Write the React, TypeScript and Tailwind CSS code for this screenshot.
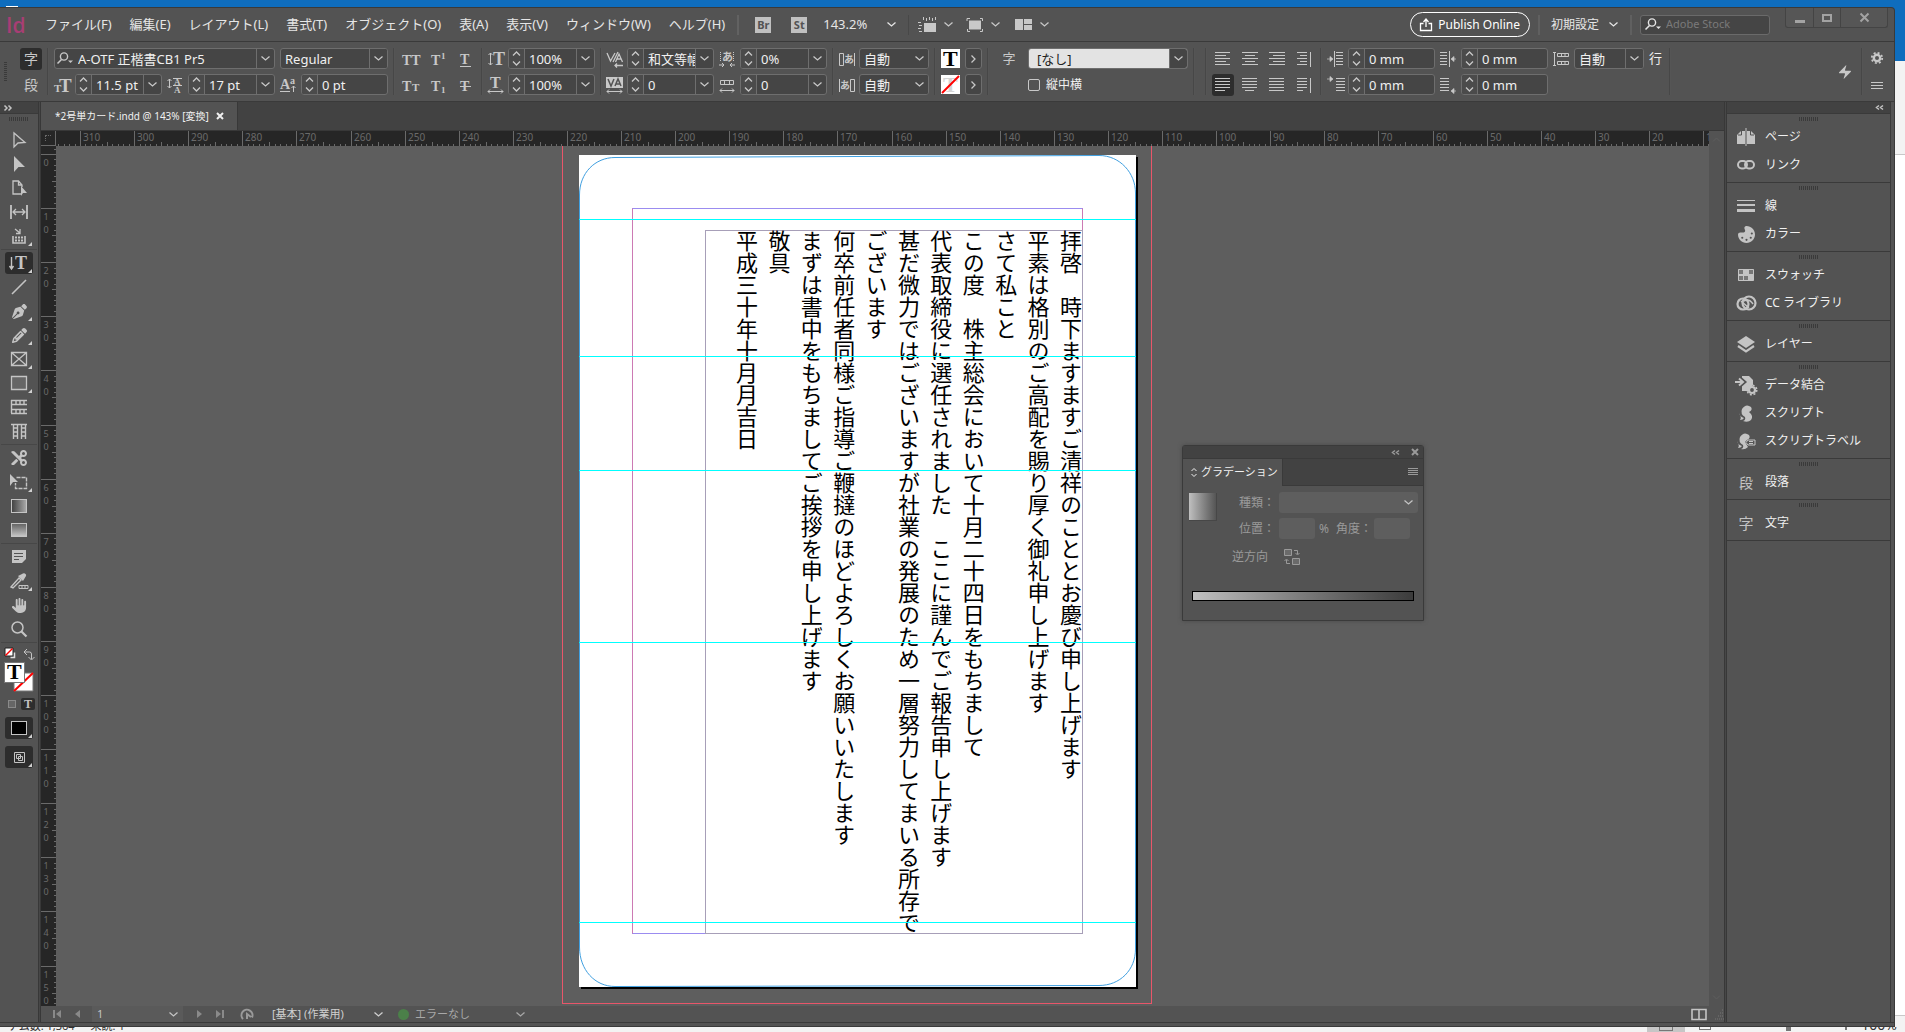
import type { ReactNode } from "react";
import { useState } from "react";
import { Zap } from "lucide-react";
import { FaHand, FaScissors, FaPalette, FaPenNib, FaPencil } from "react-icons/fa6";

const menus = [
  "ファイル(F)",
  "編集(E)",
  "レイアウト(L)",
  "書式(T)",
  "オブジェクト(O)",
  "表(A)",
  "表示(V)",
  "ウィンドウ(W)",
  "ヘルプ(H)",
];

const letter = [
  "拝啓　時下ますますご清祥のこととお慶び申し上げます",
  "平素は格別のご高配を賜り厚く御礼申し上げます",
  "さて私こと",
  "この度　株主総会において十月二十四日をもちまして",
  "代表取締役に選任されました　ここに謹んでご報告申し上げます",
  "甚だ微力ではございますが社業の発展のため一層努力してまいる所存で",
  "ございます",
  "何卒前任者同様ご指導ご鞭撻のほどよろしくお願いいたします",
  "まずは書中をもちましてご挨拶を申し上げます",
  "敬具",
  "平成三十年十月月吉日",
];

const RULER_STEP = 54.1;

function Svg({ w = 16, h = 16, children }: { w?: number; h?: number; children: ReactNode }) {
  return (
    <svg
      width={w}
      height={h}
      viewBox={`0 0 ${w} ${h}`}
      fill="none"
      stroke="currentColor"
      className="shrink-0 overflow-visible"
      aria-hidden="true"
    >
      {children}
    </svg>
  );
}

function Glyph({ x = 0, y = 14, size = 16, children }: { x?: number; y?: number; size?: number; children: string }) {
  return (
    <text
      x={x}
      y={y}
      fontSize={size}
      fontWeight="bold"
      fill="currentColor"
      stroke="none"
      className="font-['Liberation_Serif','Noto_Sans_CJK_JP',serif]"
    >
      {children}
    </text>
  );
}

function Chevron() {
  return (
    <Svg w={9} h={5}>
      <path d="M.5 .5 4.5 4 8.5 .5" strokeWidth="1.3" />
    </Svg>
  );
}

function Sep() {
  return <div className="w-[2px] shrink-0 self-stretch border-l border-[#474747] bg-[#555555]" />;
}

function Stepper({ label }: { label: string }) {
  return (
    <div className="flex w-4 shrink-0 flex-col items-center justify-between border-r border-[#6e6e6e] bg-[#4b4b4b] py-[2px]">
      <button aria-label={`${label} +`}>
        <Svg w={9} h={5}>
          <path d="M1 4.5 4.5 1 8 4.5" strokeWidth="1.3" />
        </Svg>
      </button>
      <button aria-label={`${label} -`}>
        <Svg w={9} h={5}>
          <path d="M1 .5 4.5 4 8 .5" strokeWidth="1.3" />
        </Svg>
      </button>
    </div>
  );
}

function NumberBox({ label, value, drop = false }: { label: string; value: string; drop?: boolean }) {
  const [text, setText] = useState(value);
  return (
    <div className="flex h-[21px] w-[87px] overflow-hidden rounded-[3px] border border-[#6e6e6e] bg-[#454545]">
      <Stepper label={label} />
      <input
        aria-label={label}
        value={text}
        onChange={(e) => setText(e.target.value)}
        className="min-w-0 flex-1 bg-transparent pl-1 text-[13px] leading-[18px] text-[#f0f0f0] outline-none"
      />
      {drop && (
        <button aria-label={`${label} ▾`} className="flex w-[18px] shrink-0 items-center justify-center border-l border-[#6e6e6e]">
          <Chevron />
        </button>
      )}
    </div>
  );
}

function Select({
  label,
  value,
  className,
  light = false,
  divider = true,
}: {
  label: string;
  value: string;
  className: string;
  light?: boolean;
  divider?: boolean;
}) {
  return (
    <div className={`relative h-[21px] overflow-hidden rounded-[3px] border border-[#6e6e6e] bg-[#454545] ${className}`}>
      <select
        aria-label={label}
        className={
          light
            ? "block h-full w-full appearance-none bg-[#e3e3e3] pl-2 text-[13px] leading-[18px] text-[#222222] outline-none"
            : "block h-full w-full appearance-none bg-transparent pl-1 text-[13px] leading-[18px] text-[#f0f0f0] outline-none"
        }
      >
        <option>{value}</option>
      </select>
      <span
        className={`pointer-events-none absolute inset-y-0 right-0 flex w-[18px] items-center justify-center bg-[#454545] ${
          divider ? "border-l border-[#6e6e6e]" : ""
        }`}
      >
        <Chevron />
      </span>
    </div>
  );
}

function Rows({ children, className = "" }: { children: ReactNode; className?: string }) {
  return <div className={`flex shrink-0 flex-col gap-[5px] ${className}`}>{children}</div>;
}

function Row({ children }: { children: ReactNode }) {
  return <div className="flex h-[21px] items-center gap-[5px]">{children}</div>;
}

function TypeButton({ label, children }: { label: string; children: ReactNode }) {
  return (
    <button aria-label={label} className="flex h-[21px] w-[22px] items-center justify-center">
      {children}
    </button>
  );
}

const alignLines: Record<string, number[][]> = {
  left: [[0, 15], [0, 11], [0, 15], [0, 11], [0, 15]],
  center: [[0, 16], [3, 13], [0, 16], [3, 13], [0, 16]],
  right: [[0, 16], [4, 16], [0, 16], [4, 16], [0, 16]],
  spine: [[1, 11], [4, 11], [1, 11], [4, 11], [1, 11]],
  jleft: [[0, 15], [0, 15], [0, 15], [0, 15], [0, 10]],
  jcenter: [[0, 15], [0, 15], [0, 15], [0, 15], [3, 12]],
  jfull: [[0, 15], [0, 15], [0, 15], [0, 15], [0, 15]],
  jspine: [[1, 11], [1, 11], [1, 11], [1, 11], [1, 7]],
};

function AlignButton({ kind, active = false }: { kind: string; active?: boolean }) {
  return (
    <button
      aria-label={kind}
      className={`flex h-[22px] w-[22px] items-center justify-center rounded-[3px] ${active ? "bg-[#2d2d2d]" : ""}`}
    >
      <Svg w={16} h={14}>
        {alignLines[kind].map(([a, b], i) => (
          <path key={i} d={`M${a} ${i * 3 + 0.5}H${b}`} />
        ))}
        {kind.endsWith("spine") && <path d="M14.5 0V15" />}
      </Svg>
    </button>
  );
}

function IndentIcon({ flip = false, last = false }: { flip?: boolean; last?: boolean }) {
  const x = flip ? 0 : 7;
  const arrow = flip ? "M16 8H12M14 5.5 11 8 14 10.5Z" : "M0 8H4M3 5.5 6 8 3 10.5Z";
  return (
    <Svg>
      {[1, 4, 7, 10, 13].map((y) => (
        <path key={y} d={`M${x + (flip ? 0 : 2)} ${y + 0.5}h${last ? 9 : 7}`} />
      ))}
      {!last && <path d={flip ? "M9.5 0V16" : "M7.5 0V16"} />}
      <g transform={last ? (flip ? "translate(0 6)" : "translate(0 -6)") : undefined}>
        <path d={arrow} fill="currentColor" strokeWidth=".7" />
      </g>
    </Svg>
  );
}

function MenuBar() {
  return (
    <header className="flex h-[34px] shrink-0 items-center border-b border-[#3a3a3a] text-[13px] text-[#e6e6e6]">
      <span className="w-[45px] pl-[6px] font-['Open_Sans',sans-serif] text-[21px] leading-6 font-semibold text-[#a83e74]">Id</span>
      <nav className="flex gap-[18px]">
        {menus.map((m) => (
          <button key={m} className="whitespace-nowrap">
            {m}
          </button>
        ))}
      </nav>
      <div className="ml-3 h-5 w-[2px] bg-[#626262]" />
      <button className="ml-4 h-4 w-4 bg-[#c0c0c0] text-[11px] leading-4 font-bold text-[#535353]">Br</button>
      <button className="ml-5 h-4 w-4 bg-[#c0c0c0] text-[11px] leading-4 font-bold text-[#535353]">St</button>
      <button className="ml-4 flex items-center gap-5">
        143.2%
        <Chevron />
      </button>
      <div className="ml-3 h-5 w-px bg-[#484848]" />
      <button aria-label="表示オプション" className="ml-[9px] flex items-center gap-2 text-[#c8c8c8]">
        <Svg w={18} h={16}>
          <path d="M5.5 3V0M8.5 4V1M11.5 3V0M14.5 4V1M17.5 3V0M0 5.500H3M1 8.500H4M0 11.500H3M1 14.500H4" />
          <path d="M6 6h12v9H6z" fill="currentColor" stroke="none" />
        </Svg>
        <Chevron />
      </button>
      <button aria-label="スクリーンモード" className="ml-[14px] flex items-center gap-2 text-[#c8c8c8]">
        <Svg w={16} h={14}>
          <path d="M0 3V.5H3M13 .5h2.500V3M0.500 11v2.500H3M13 13.500h2.500V11" />
          <path d="M2 2.500h12v9H2z" fill="currentColor" stroke="none" />
        </Svg>
        <Chevron />
      </button>
      <button aria-label="ドキュメントレイアウト" className="ml-[15px] flex items-center gap-2 text-[#c8c8c8]">
        <Svg w={17} h={11}>
          <path d="M0 0h8v11H0zM9 0h8v5H9zM9 6h8v5H9z" fill="currentColor" stroke="none" />
        </Svg>
        <Chevron />
      </button>
      <div className="ml-auto flex h-full items-center">
        <button className="flex h-[25px] items-center gap-[6px] rounded-full border border-white px-[9px] text-[12px] text-white">
          <Svg w={12} h={13}>
            <path d="M3.500 5.500H.5v7h11v-7h-3M6 9V1.500M3.500 4 6 1l2.500 3" strokeWidth="1.3" />
          </Svg>
          Publish Online
        </button>
        <div className="ml-2 h-5 w-[2px] bg-[#606060]" />
        <button className="ml-[11px] flex items-center gap-[10px] text-[12px]">
          初期設定
          <Chevron />
        </button>
        <div className="ml-3 h-5 w-[2px] bg-[#606060]" />
        <label className="ml-2 flex h-5 w-[130px] items-center gap-1 rounded-[3px] border border-[#6a6a6a] bg-[#454545] pl-1">
          <SearchGlyph />
          <input
            aria-label="Adobe Stock"
            placeholder="Adobe Stock"
            className="min-w-0 flex-1 bg-transparent text-[11px] outline-none placeholder:text-[#7a7a7a]"
          />
        </label>
        <div className="mr-[6px] ml-[15px] flex h-5 self-start rounded-b-[3px] border border-t-0 border-[#444444] bg-[#565656] text-[#a3a3a3]">
          <button aria-label="最小化" className="flex w-[27px] items-end justify-center pb-1">
            <span className="h-[3px] w-[10px] bg-[#a3a3a3]" />
          </button>
          <button aria-label="最大化" className="flex w-7 items-center justify-center border-x border-[#444444]">
            <span className="h-2 w-[10px] border-2 border-[#a3a3a3]" />
          </button>
          <button aria-label="閉じる" className="flex w-[46px] items-center justify-center">
            <Svg w={9} h={9}>
              <path d="M.5 .5l8 8M8.500 .5l-8 8" strokeWidth="2" />
            </Svg>
          </button>
        </div>
      </div>
    </header>
  );
}

function SearchGlyph() {
  return (
    <Svg w={17} h={13}>
      <circle cx="7" cy="4.500" r="3.600" strokeWidth="1.400" />
      <path d="M4.500 7.500.5 11.500" strokeWidth="1.600" />
      <path d="M11 8.500h5l-2.500 2.500z" fill="currentColor" stroke="none" />
    </Svg>
  );
}

function ControlPanel() {
  return (
    <section className="flex h-[60px] shrink-0 items-start gap-[5px] border-b border-[#3a3a3a] py-[6px] pl-1 text-[#c8c8c8]">
      <div className="mt-[14px] h-5 w-[3px] bg-[repeating-linear-gradient(to_bottom,#3a3a3a_0_1px,transparent_1px_2px)]" />
      <div className="ml-2 flex w-[22px] flex-col gap-1">
        <button className="h-[22px] rounded-[3px] bg-[#2d2d2d] text-[14px] leading-[22px]">字</button>
        <button className="h-[22px] text-[14px] leading-[22px]">段</button>
      </div>
      <Sep />
      <Rows>
        <Row>
          <div className="flex h-[21px] w-[221px] items-center rounded-[3px] border border-[#6e6e6e] bg-[#454545] pl-[2px]">
            <SearchGlyph />
            <input
              aria-label="フォント"
              defaultValue="A-OTF 正楷書CB1 Pr5"
              className="min-w-0 flex-1 bg-transparent pl-1 text-[13px] leading-[18px] text-[#f0f0f0] outline-none"
            />
            <button aria-label="フォント一覧" className="flex h-full w-[18px] items-center justify-center border-l border-[#6e6e6e]">
              <Chevron />
            </button>
          </div>
          <Select label="フォントスタイル" value="Regular" className="w-[108px]" />
        </Row>
        <Row>
          <Svg>
            <Glyph size={11} y={15}>T</Glyph>
            <Glyph size={19} x={5} y={15}>T</Glyph>
          </Svg>
          <NumberBox label="フォントサイズ" value="11.5 pt" drop />
          <Svg>
            <path d="M2.500 2v9M.5 4l2-2 2 2M.5 9l2 2 2-2M6 1.500h9M6 8.500h9" />
            <Glyph size={9} x={7} y={8}>A</Glyph>
            <Glyph size={9} x={7} y={16}>A</Glyph>
          </Svg>
          <NumberBox label="行送り" value="17 pt" drop />
          <Svg>
            <Glyph size={14} y={12}>A</Glyph>
            <Glyph size={10} x={10} y={7}>a</Glyph>
            <path d="M0 14.500h10M13.500 15V9M11.500 11l2-2 2 2" />
          </Svg>
          <NumberBox label="ベースラインシフト" value="0 pt" />
        </Row>
      </Rows>
      <Sep />
      <Rows>
        <Row>
          <TypeButton label="オールキャップス">
            <Svg w={18}><Glyph size={14}>TT</Glyph></Svg>
          </TypeButton>
          <TypeButton label="上付き文字">
            <Svg w={14}><Glyph size={14}>T</Glyph><Glyph size={9} x={10} y={8}>1</Glyph></Svg>
          </TypeButton>
          <TypeButton label="下線">
            <Svg w={11}><Glyph size={14} y={13}>T</Glyph><path d="M0 15.500h11" /></Svg>
          </TypeButton>
        </Row>
        <Row>
          <TypeButton label="スモールキャップス">
            <Svg w={18}><Glyph size={14}>T</Glyph><Glyph size={11} x={10}>T</Glyph></Svg>
          </TypeButton>
          <TypeButton label="下付き文字">
            <Svg w={14}><Glyph size={14}>T</Glyph><Glyph size={9} x={10} y={16}>1</Glyph></Svg>
          </TypeButton>
          <TypeButton label="打ち消し線">
            <Svg w={11}><Glyph size={14}>T</Glyph><path d="M0 9.500h11" /></Svg>
          </TypeButton>
        </Row>
      </Rows>
      <Sep />
      <Rows>
        <Row>
          <Svg w={15}>
            <path d="M2.500 2v12M.5 4l2-2 2 2M.5 12l2 2 2-2" />
            <Glyph size={18} x={5} y={14}>T</Glyph>
          </Svg>
          <NumberBox label="垂直比率" value="100%" drop />
        </Row>
        <Row>
          <Svg w={15}>
            <Glyph size={16} x={2} y={11}>T</Glyph>
            <path d="M0 14.500h15M2 12.500l-2 2 2 2M13 12.500l2 2-2 2" />
          </Svg>
          <NumberBox label="水平比率" value="100%" drop />
        </Row>
      </Rows>
      <Sep />
      <Rows>
        <Row>
          <Svg w={15}>
            <path d="M0 2l3.500 8L8 2M6 11l5-10M8.500 11 12 3l3.500 8M10 8h4M8 14.500h8M10 12.500l-2 2 2 2" strokeWidth="1.300" />
          </Svg>
          <NumberBox label="カーニング" value="和文等幅" drop />
          <Svg>
            <path d="M1.500 1v9M14.500 1v9" strokeDasharray="1 1" />
            <Glyph size={11} x={3} y={10}>あ</Glyph>
            <path d="M0 14h5M3 12l2 2-2 2M16 14h-5M13 12l-2 2 2 2" />
          </Svg>
          <NumberBox label="文字ツメ" value="0%" drop />
        </Row>
        <Row>
          <Svg w={15}>
            <path d="M-1 0h17v11H-1z" fill="currentColor" stroke="none" />
            <path d="M1 2l3 7 3-7M8 9l3-7 3 7M9 7h4" stroke="#535353" strokeWidth="1.500" />
            <path d="M0 14.500h15M2 12.500l-2 2 2 2M13 12.500l2 2-2 2" />
          </Svg>
          <NumberBox label="トラッキング" value="0" drop />
          <Svg>
            <path d="M1.500 3.500h13v4h-13zM5.500 3v4M10.500 3v4M1 13.500h14M3 11.500l-2 2 2 2M13 11.500l2 2-2 2" />
          </Svg>
          <NumberBox label="グリッド文字数" value="0" drop />
        </Row>
      </Rows>
      <Sep />
      <Rows>
        <Row>
          <Svg w={15}>
            <path d="M.5 2.500h4v12h-4zM15.500 2v13" />
            <Glyph size={10} x={5} y={12}>あ</Glyph>
          </Svg>
          <Select label="文字前のアキ量" value="自動" className="w-[70px]" divider={false} />
        </Row>
        <Row>
          <Svg w={15}>
            <path d="M.5 2v13M11.500 2.500h4v12h-4z" />
            <Glyph size={10} x={1} y={12}>あ</Glyph>
          </Svg>
          <Select label="文字後のアキ量" value="自動" className="w-[70px]" divider={false} />
        </Row>
      </Rows>
      <Sep />
      <Rows>
        <Row>
          <Svg w={19} h={19}>
            <path d="M0 0h19v19H0z" fill="#fff" stroke="none" />
            <g className="text-black"><Glyph size={22} x={2} y={17}>T</Glyph></g>
          </Svg>
          <button aria-label="塗り" className="flex h-[21px] w-[17px] items-center justify-center rounded-[3px] border border-[#6e6e6e] bg-[#454545]">
            <Svg w={5} h={8}><path d="M.5 .5 4 4 .5 7.500" strokeWidth="1.300" /></Svg>
          </button>
        </Row>
        <Row>
          <Svg w={19} h={19}>
            <path d="M0 0h19v19H0z" fill="#fff" stroke="none" />
            <g className="text-[#d5d5d5]"><Glyph size={22} x={2} y={17}>T</Glyph></g>
            <path d="M1 18 18 1" stroke="#f00" strokeWidth="2" />
          </Svg>
          <button aria-label="線" className="flex h-[21px] w-[17px] items-center justify-center rounded-[3px] border border-[#6e6e6e] bg-[#454545]">
            <Svg w={5} h={8}><path d="M.5 .5 4 4 .5 7.500" strokeWidth="1.300" /></Svg>
          </button>
        </Row>
      </Rows>
      <Sep />
      <div className="flex gap-3 pl-2">
        <button className="h-[21px] w-[14px] text-[13px] leading-[21px]">字</button>
        <Rows>
          <Select label="文字スタイル" value="[なし]" className="w-[160px]" light />
          <label className="flex h-[21px] items-center gap-[6px] text-[12px] text-[#f0f0f0]">
            <input type="checkbox" className="h-3 w-3 appearance-none rounded-[2px] border border-[#c8c8c8]" />
            縦中横
          </label>
        </Rows>
      </div>
      <Sep />
      <div className="w-0" />
      <Sep />
      <div className="grid grid-cols-4 gap-x-[5px] gap-y-1">
        <AlignButton kind="left" />
        <AlignButton kind="center" />
        <AlignButton kind="right" />
        <AlignButton kind="spine" />
        <AlignButton kind="jleft" active />
        <AlignButton kind="jcenter" />
        <AlignButton kind="jfull" />
        <AlignButton kind="jspine" />
      </div>
      <Sep />
      <Rows>
        <Row>
          <IndentIcon />
          <NumberBox label="左インデント" value="0 mm" />
          <IndentIcon flip />
          <NumberBox label="右インデント" value="0 mm" />
          <Svg>
            <path d="M1.500 1v14M0 1.500h3M0 14.500h3M4.500 2.500h11v3h-11zM8.500 2v3M12 2v3M4.500 10.500h11v3h-11zM8.500 10v3M12 10v3" />
          </Svg>
          <Select label="行取り" value="自動" className="w-[70px]" />
          <span className="w-[15px] text-[13px] leading-[21px] text-[#f0f0f0]">行</span>
        </Row>
        <Row>
          <IndentIcon last />
          <NumberBox label="1行目左インデント" value="0 mm" />
          <IndentIcon flip last />
          <NumberBox label="最終行の右インデント" value="0 mm" />
        </Row>
      </Rows>
      <Sep />
      <div className="ml-auto flex gap-2 self-stretch pr-[11px]">
        <button aria-label="クイック適用" className="self-center">
          <Zap size={16} fill="currentColor" strokeWidth={0} />
        </button>
        <Sep />
        <div className="flex flex-col justify-between py-1">
          <button aria-label="カスタマイズ">
            <Svg w={12} h={12}>
              <circle cx="6" cy="6" r="3.200" strokeWidth="2.400" />
              <circle cx="6" cy="6" r="5.200" strokeWidth="1.800" strokeDasharray="2 2.084" />
            </Svg>
          </button>
          <button aria-label="パネルメニュー"><Svg w={12} h={10}><path d="M0 1.500h12M0 4.500h12M0 7.500h12" /></Svg></button>
        </div>
      </div>
    </section>
  );
}

function Tool({ label, active = false, more = false, children }: { label: string; active?: boolean; more?: boolean; children: ReactNode }) {
  return (
    <button
      aria-label={label}
      className={`relative my-px flex h-[22px] w-7 shrink-0 items-center justify-center rounded-[3px] ${active ? "bg-[#2d2d2d]" : ""}`}
    >
      {children}
      {more && <span className="absolute right-px bottom-px border-[2px] border-t-transparent border-r-[#d0d0d0] border-b-[#d0d0d0] border-l-transparent" />}
    </button>
  );
}

function ToolRule() {
  return <div className="my-px h-px w-9 shrink-0 bg-[#474747]" />;
}

function ToolPanel() {
  return (
    <aside className="flex w-[38px] shrink-0 flex-col items-center text-[#c4c4c4]">
      <button aria-label="展開" className="flex h-3 w-full shrink-0 items-center border-b border-[#3a3a3a] bg-[#424242] pl-1">
        <Svg w={8} h={6}><path d="M.5 .5 3 3 .5 5.500M4.500 .5 7 3 4.500 5.500" strokeWidth="1.500" /></Svg>
      </button>
      <div className="mt-[3px] mb-[7px] h-1 w-5 shrink-0 bg-[repeating-linear-gradient(to_right,#3a3a3a_0_1px,transparent_1px_2px)]" />
      <Tool label="選択"><Svg><path d="M3 1v14l4-4 7-.5z" strokeWidth="1.300" /></Svg></Tool>
      <Tool label="ダイレクト選択"><Svg><path d="M3 0v16l4.500-5H14z" fill="currentColor" stroke="none" /></Svg></Tool>
      <Tool label="ページ"><Svg><path d="M11 7V5L7.500 1H2v13h8M7.500 1v4H11" strokeWidth="1.300" /><path d="M10 6v10l2-3h4z" fill="currentColor" stroke="none" /></Svg></Tool>
      <Tool label="間隔"><Svg w={18}><path d="M1 1v14M17 1v14" strokeWidth="1.800" /><path d="M3 8h12M6 5 3 8l3 3M12 5l3 3-3 3" strokeWidth="1.300" /></Svg></Tool>
      <Tool label="コンテンツ収集" more><Svg><path d="M2 8v7h12V8" strokeWidth="1.600" /><path d="M4 9.500h8M4 12.500h8" strokeWidth="2" strokeDasharray="2 1" /><path d="M4 1l5 4M9 1v4.500H5" strokeWidth="1.300" /></Svg></Tool>
      <ToolRule />
      <Tool label="縦組み文字" active more>
        <Svg w={20}><path d="M2.500 2v12M.5 11l2 3 2-3" strokeWidth="1.400" /><Glyph size={18} x={6} y={14}>T</Glyph></Svg>
      </Tool>
      <Tool label="線"><Svg><path d="M1 15 15 1" strokeWidth="1.600" /></Svg></Tool>
      <Tool label="ペン" more><FaPenNib size={15} /></Tool>
      <Tool label="鉛筆" more><FaPencil size={15} /></Tool>
      <Tool label="長方形フレーム" more><Svg><path d="M.5 1.500h15v13H.5zM1 2l14 12M15 2 1 14" strokeWidth="1.300" /></Svg></Tool>
      <Tool label="長方形" more><Svg><path d="M.5 1.500h15v13H.5z" fill="#666666" strokeWidth="1.300" /></Svg></Tool>
      <Tool label="横組みグリッド"><Svg><path d="M0 1.500h16M.5 1v13M0 5.500h16M0 10.500h16M0 14.500h16M5 2v4M9 2v4M13 2v4M5 11v4M9 11v4M13 11v4" strokeWidth="1.400" /></Svg></Tool>
      <Tool label="縦組みグリッド"><Svg><path d="M0 1.500h16M2.500 1v15M6.500 1v15M10.500 1v15M14.500 1v15M3 5h4M3 9h4M3 13h4M11 5h4M11 9h4M11 13h4" strokeWidth="1.400" /></Svg></Tool>
      <ToolRule />
      <Tool label="はさみ"><FaScissors size={16} className="-scale-x-100" /></Tool>
      <Tool label="自由変形" more><Svg w={20}><path d="M1 0v12l3-4h5z" fill="currentColor" stroke="none" /><path d="M7.500 3.500h10v11h-11V9" strokeDasharray="4 1" strokeWidth="1.400" /></Svg></Tool>
      <Tool label="グラデーションスウォッチ"><span className="h-[14px] w-4 border border-[#c4c4c4] bg-linear-to-r from-[#444444] to-[#a8a8a8]" /></Tool>
      <Tool label="グラデーションぼかし"><span className="h-[14px] w-4 border border-[#c4c4c4] bg-linear-to-b from-[#666666] to-[#c4c4c4]" /></Tool>
      <ToolRule />
      <Tool label="注釈"><Svg><path d="M1 1h14v9l-4 4H1z" fill="currentColor" stroke="none" /><path d="M3 4.500h9M3 7.500h9M3 10.500h5" stroke="#535353" /></Svg></Tool>
      <Tool label="カラーテーマ" more><Svg w={18}><path d="M1 14 9 5l2 2-8 8z" strokeWidth="1.400" /><path d="M8 3l5 5 3-5c1-2-2-4-4-2z" fill="currentColor" stroke="none" /><path d="M9 12.500h9v3H9zM12 12v3M15 12v3" /></Svg></Tool>
      <Tool label="手のひら"><FaHand size={15} /></Tool>
      <Tool label="ズーム"><Svg><circle cx="6.500" cy="6.500" r="5.500" strokeWidth="1.500" /><path d="M10.500 10.500 15.500 15.500" strokeWidth="2.200" /></Svg></Tool>
      <ToolRule />
      <Svg w={38} h={48}>
        <path d="M5 4h8v8H5z" fill="#fff" stroke="#222" /><path d="M5.500 11.500l7-7" stroke="#f00" strokeWidth="1.500" />
        <path d="M10.500 13.500h4v-5" strokeWidth="1.500" stroke="#ddd" />
        <path d="M25 8h4.500q2 0 2 2v5M27 5l-3 3 3 3M28.500 13l3 3 3-3" />
        <path d="M14 29h19v18H14z" fill="#fff" stroke="#777" />
        <path d="M14 47 33 29" stroke="#f00" strokeWidth="2" />
        <path d="M4.500 18.500h20v20h-20z" fill="#fff" stroke="#777" />
        <g className="text-black"><Glyph size={22} x={7} y={35}>T</Glyph></g>
      </Svg>
      <div className="flex h-6 w-full items-center pl-2">
        <button aria-label="オブジェクトに適用" className="h-2 w-2 border border-[#8a8a8a] bg-[#666666]" />
        <button className="ml-[5px] h-3 w-[14px] rounded-[2px] bg-[#2d2d2d] font-['Liberation_Serif',serif] text-[12px] leading-3 font-bold">T</button>
      </div>
      <div className="flex flex-col gap-[5px]">
        <Tool label="カラーを適用" active more><span className="h-[14px] w-4 border border-[#c4c4c4] bg-black" /></Tool>
        <Tool label="表示モード" active more><Svg w={11} h={11}><path d="M.5 .5h10v10H.5zM2.500 2.500h4v4h-4zM4.500 4.500h4v4h-4z" /></Svg></Tool>
      </div>
    </aside>
  );
}

function HorizontalRuler() {
  const ticks = Array.from({ length: 320 }, (_, i) => i);
  return (
    <svg className="h-[15px] min-w-0 flex-1 bg-[#262626]" stroke="#6a6a6a" aria-hidden="true">
      {ticks.map((i) => {
        const x = Math.round(24 + ((i - 4) * RULER_STEP) / 10) + 0.5;
        const major = i % 10 === 4;
        const half = i % 10 === 9;
        return <path key={i} d={`M${x} ${major ? 0 : half ? 11 : 13}V15`} />;
      })}
      {Array.from({ length: 31 }, (_, i) => (
        <text key={i} x={Math.round(27 + i * RULER_STEP)} y="10" fontSize="10" fill="#6a6a6a" stroke="none">
          {310 - i * 10}
        </text>
      ))}
    </svg>
  );
}

function VerticalRuler() {
  return (
    <svg className="w-[15px] shrink-0 bg-[#262626]" stroke="#6a6a6a" aria-hidden="true">
      {Array.from({ length: 160 }, (_, i) => {
        const y = Math.round(8 + ((i - 1) * RULER_STEP) / 10) + 0.5;
        const n = (i + 9) % 10;
        return <path key={i} d={`M${n === 0 ? 0 : n === 5 ? 11 : 13} ${y}H15`} />;
      })}
      {Array.from({ length: 16 }, (_, i) => (
        <text
          key={i}
          x="5"
          y={Math.round(10 + i * RULER_STEP)}
          fontSize="9"
          fill="#6a6a6a"
          stroke="none"
          className="[text-orientation:upright] [writing-mode:vertical-rl]"
        >
          {i * 10}
        </text>
      ))}
    </svg>
  );
}

function Letter() {
  return (
    <div className="absolute top-0 left-[506px] h-[858px] w-[590px] border border-t-0 border-[#e8566a]">
      <article className="absolute top-[9px] left-4 h-[832px] w-[557px] bg-white shadow-[2px_2px_0_#000000]">
        <svg width="557" height="832" fill="none" className="absolute inset-0" aria-hidden="true">
          <path
            d="M.5 40C.5 18 16 2.500 36 2.500L520 .5C541 .5 556.500 18 556.500 38V794C556.500 815 541 830.500 520 830.500L36 831.500C16 831.500.5 815 .5 792Z"
            stroke="#3f9fe0"
          />
        </svg>
        <div className="absolute top-[53px] left-[53px] h-[726px] w-[451px] border border-x-[#cc7ab4] border-y-[#9b8cf0]" />
        <div className="absolute top-[75px] left-[126px] h-[704px] w-[378px] border border-[#a79fb8]" />
        <div className="absolute top-[75px] right-[53px] flex w-[348px] flex-row-reverse justify-between font-['Noto_Sans_CJK_JP',sans-serif] text-[22px] leading-6 text-black">
          {letter.map((line) => (
            <p key={line} className="whitespace-nowrap [writing-mode:vertical-rl]">
              {line}
            </p>
          ))}
        </div>
        <div className="absolute inset-x-0 top-[64px] h-px bg-[#00ffff]" />
        <div className="absolute inset-x-0 top-[201px] h-px bg-[#00ffff]" />
        <div className="absolute inset-x-0 top-[315px] h-px bg-[#00ffff]" />
        <div className="absolute inset-x-0 top-[487px] h-px bg-[#00ffff]" />
        <div className="absolute inset-x-0 top-[767px] h-px bg-[#00ffff]" />
      </article>
    </div>
  );
}

function GradientPanel() {
  return (
    <section className="absolute top-[299px] left-[1126px] flex h-44 w-[242px] flex-col rounded-t-[3px] border border-[#3a3a3a] bg-[#535353] text-[12px] text-[#9a9a9a] shadow-[0_0_4px_#4a4a4a]">
      <div className="flex h-[13px] items-center justify-end gap-3 border-b border-[#3a3a3a] bg-[#424242] pr-[5px]">
        <button aria-label="折りたたむ"><Svg w={8} h={5}><path d="M3 .5.500 2.500 3 4.500M7 .5 4.500 2.500 7 4.500" strokeWidth="1.500" /></Svg></button>
        <button aria-label="閉じる"><Svg w={6} h={6}><path d="M0 0l6 6M6 0 0 6" strokeWidth="2" /></Svg></button>
      </div>
      <div className="flex h-[27px] bg-[#424242]">
        <div className="flex items-center gap-1 border-r border-[#3a3a3a] bg-[#535353] pr-1 pl-2 text-[11px] text-[#f0f0f0]">
          <Svg w={6} h={9}><path d="M.5 3 3 .5 5.500 3M.5 6 3 8.500 5.500 6" /></Svg>
          グラデーション
        </div>
        <div className="flex flex-1 items-center justify-end border-b border-[#3a3a3a] pr-[5px]">
          <button aria-label="パネルメニュー">
            <Svg w={10} h={8}><path d="M0 .5h10M0 2.500h10M0 4.500h10M0 6.500h10" /></Svg>
          </button>
        </div>
      </div>
      <div className="flex gap-[22px] pt-[6px] pl-[6px]">
        <div className="mt-px h-7 w-7 border-r border-b border-[#474747] bg-linear-to-r from-[#c0c0c0] to-[#555555]" />
        <div className="flex flex-1 flex-col gap-[5px]">
          <div className="flex h-[21px] items-center">
            <label htmlFor="gtype" className="w-10">種類：</label>
            <div className="relative h-full w-[139px] rounded-[3px] bg-[#5e5e5e]">
              <select id="gtype" disabled className="h-full w-full appearance-none bg-transparent" />
              <span className="pointer-events-none absolute inset-y-0 right-[5px] flex items-center text-[#c4c4c4]"><Chevron /></span>
            </div>
          </div>
          <div className="flex h-[21px] items-center">
            <label htmlFor="gpos" className="w-10">位置：</label>
            <input id="gpos" disabled className="h-full w-9 rounded-[3px] bg-[#5e5e5e]" />
            <span className="w-[21px] pl-1">%</span>
            <label htmlFor="gang" className="w-[38px]">角度：</label>
            <input id="gang" disabled className="h-full w-9 rounded-[3px] bg-[#5e5e5e]" />
          </div>
        </div>
      </div>
      <div className="mt-[6px] flex h-6 items-center gap-4 pl-[49px]">
        逆方向
        <button aria-label="逆方向">
          <Svg><path d="M.5 .5h7v6h-7zM8.500 9.500h7v6h-7z" fill="#6a6a6a" /><path d="M10 1.500h3.500V5M11.500 4l2 2 2-2M6 14.500H2.500V11M.5 12l2-2 2 2" /></Svg>
        </button>
      </div>
      <div className="mx-[9px] mt-[22px] h-[10px] border border-black bg-linear-to-r from-[#c0c0c0] to-[#3c3c3c]" />
    </section>
  );
}

function StatusBar() {
  return (
    <footer className="flex h-4 shrink-0 items-center bg-[#535353] text-[11px] leading-4 text-[#c4c4c4]">
      <button aria-label="先頭ページ" className="ml-3 text-[#8a8a8a]"><Svg w={8} h={8}><path d="M1 0v8" strokeWidth="2" /><path d="M8 0v8L3 4z" fill="currentColor" stroke="none" /></Svg></button>
      <button aria-label="前ページ" className="ml-[14px] text-[#8a8a8a]"><Svg w={5} h={8}><path d="M5 0v8L0 4z" fill="currentColor" stroke="none" /></Svg></button>
      <div className="ml-3 flex h-4 w-[91px] items-center bg-[#5a5a5a] pr-[5px] pl-[5px]">
        <input aria-label="ページ番号" defaultValue="1" className="min-w-0 flex-1 bg-transparent leading-4 outline-none" />
        <Chevron />
      </div>
      <button aria-label="次ページ" className="ml-[14px] text-[#8a8a8a]"><Svg w={5} h={8}><path d="M0 0v8l5-4z" fill="currentColor" stroke="none" /></Svg></button>
      <button aria-label="最終ページ" className="ml-[14px] text-[#8a8a8a]"><Svg w={8} h={8}><path d="M7 0v8" strokeWidth="2" /><path d="M0 0v8l5-4z" fill="currentColor" stroke="none" /></Svg></button>
      <button aria-label="プリフライト" className="ml-4 text-[#9a9a9a]"><Svg w={16} h={12}><path d="M3 11A5.500 5.500 0 1 1 12 9.500M7 11V6l4 3" strokeWidth="2" /></Svg></button>
      <button className="ml-4 flex w-[111px] items-center justify-between text-[#d0d0d0]">
        [基本] (作業用)
        <Chevron />
      </button>
      <span className="ml-[15px] h-[11px] w-[11px] rounded-full bg-[#4b8049]" />
      <button className="ml-[6px] flex w-[110px] items-center justify-between text-[#a8a8a8]">
        エラーなし
        <Chevron />
      </button>
      <button aria-label="分割レイアウト" className="mr-[7px] ml-auto"><Svg w={16} h={11}><path d="M1 .5h14v10H1zM8 0v11" strokeWidth="1.600" /></Svg></button>
      <Svg w={10} h={12}><path d="M8 2h2M6 5h4M4 8h6M1 11h9" stroke="#777" strokeDasharray="1 1" /></Svg>
    </footer>
  );
}

const dockGroups: { name: string; icon: ReactNode }[][] = [
  [
    { name: "ページ", icon: <Svg w={18} h={18}><path d="M0 16V7l4-4h4v13zM18 16V7l-4-4h-4v13z" fill="currentColor" stroke="none" /><path d="M9 0v18" /><path d="M4.500 3v4H1M13.500 3v4H17" stroke="#535353" /></Svg> },
    { name: "リンク", icon: <Svg w={18} h={10}><rect x="1" y="1" width="9" height="7.500" rx="3.700" strokeWidth="2" /><rect x="8" y="1" width="9" height="7.500" rx="3.700" strokeWidth="2" /></Svg> },
  ],
  [
    { name: "線", icon: <Svg w={18} h={12}><path d="M0 .5h18" /><path d="M0 5h18" strokeWidth="2" /><path d="M0 10.500h18" strokeWidth="3" /></Svg> },
    { name: "カラー", icon: <FaPalette size={17} className="-scale-100" /> },
  ],
  [
    { name: "スウォッチ", icon: <Svg w={16} h={12}><path d="M.5 .5h15v11H.5z" fill="currentColor" /><path d="M1 1h4v4H1zM11 1h4v4h-4zM6 7h4v4H6zM1 7h4v4H1z" fill="#777" stroke="none" /></Svg> },
    { name: "CC ライブラリ", icon: <Svg w={21} h={16}><circle cx="7" cy="9" r="5.500" strokeWidth="2.200" /><circle cx="13" cy="8" r="6.500" strokeWidth="2.200" /><path d="M5 6l8 7M8 6q5-3 9 3" strokeWidth="1.500" /></Svg> },
  ],
  [{ name: "レイヤー", icon: <Svg w={18} h={17}><path d="M9 0l9 6-9 6-9-6z" fill="currentColor" stroke="none" /><path d="M1 10l8 5.500L17 10" strokeWidth="2.200" /></Svg> }],
  [
    { name: "データ結合", icon: <Svg w={22} h={19}><path d="M7 0h7l4 4v5l-5 6H7z" fill="currentColor" stroke="none" /><path d="M0 6h7M5 2.500 9 6 5 9.500" stroke="#535353" strokeWidth="4" /><path d="M0 6h7M4 2.500 8 6 4 9.500" strokeWidth="2" /><circle cx="17" cy="14" r="3" strokeWidth="2.200" /><circle cx="17" cy="14" r="4.800" strokeDasharray="2 1.770" strokeWidth="1.500" /></Svg> },
    { name: "スクリプト", icon: <Svg w={14} h={17}><path d="M3 4q4-6 9-2 2 3-2 5 5 4 2 8-3 3-8 1 3-1 2-4-5-3-3-8zM0 8q1 4 5 5-1 2-4 2 2-2-1-7z" fill="currentColor" stroke="none" /></Svg> },
    { name: "スクリプトラベル", icon: <Svg w={18} h={17}><path d="M3 4q4-6 9-2 2 3-2 5l-2 2 3 5q-3 3-7 2 3-1 2-4-5-3-3-8zM0 8q1 4 5 5-1 2-4 2 2-2-1-7z" fill="currentColor" stroke="none" /><path d="M9 9.500 11 7h7v5h-7z" fill="#535353" /><path d="M12 8.500h4M12 10.500h4" /></Svg> },
  ],
  [{ name: "段落", icon: <span className="text-[14px]">段</span> }],
  [{ name: "文字", icon: <span className="text-[15px]">字</span> }],
];

function Dock() {
  return (
    <aside className="flex w-[164px] shrink-0 flex-col border-r border-[#3a3a3a]">
      <button aria-label="パネルを展開" className="flex h-3 shrink-0 items-center justify-end border-b border-[#3a3a3a] bg-[#424242] pr-[6px] text-[#c4c4c4]">
        <Svg w={8} h={5}><path d="M3 .5.500 2.500 3 4.500M7 .5 4.500 2.500 7 4.500" strokeWidth="1.500" /></Svg>
      </button>
      {dockGroups.map((group, i) => (
        <div key={i} className="flex flex-col border-b border-[#3a3a3a] pt-[3px] pb-[3px]">
          <div className="mb-[2px] h-1 w-5 self-center bg-[repeating-linear-gradient(to_right,#3a3a3a_0_1px,transparent_1px_2px)]" />
          {group.map((item) => (
            <button key={item.name} className="flex h-7 items-center text-[12px] text-[#f0f0f0]">
              <span className="flex w-[38px] justify-center text-[#c4c4c4]">{item.icon}</span>
              {item.name}
            </button>
          ))}
        </div>
      ))}
    </aside>
  );
}

export default function App() {
  return (
    <div className="flex h-screen flex-col overflow-hidden bg-[#0f6dbd] font-['Noto_Sans','Noto_Sans_CJK_JP',sans-serif]">
      <div className="flex h-[7px] shrink-0 items-end pl-[6px]">
        <span className="h-px w-3 bg-white" />
      </div>
      <div className="flex min-h-0 flex-1">
        <div className="flex min-w-0 flex-1 flex-col rounded-tr-[4px] border-t border-r border-b border-[#3a3a3a] bg-[#535353]">
          <MenuBar />
          <ControlPanel />
          <div className="flex min-h-0 flex-1">
            <ToolPanel />
            <div className="w-[3px] shrink-0 border-x border-[#383838] bg-[#474747]" />
            <main className="flex min-w-0 flex-1 flex-col">
              <div className="flex h-[29px] shrink-0 border-b border-[#383838] bg-[#424242]">
                <div className="flex w-[197px] items-center gap-2 border-r border-[#383838] bg-[#535353] pl-[14px] text-[10px] whitespace-nowrap text-[#f0f0f0]">
                  *2号単カード.indd @ 143% [変換]
                  <button aria-label="閉じる">
                    <Svg w={6} h={6}><path d="M0 0l6 6M6 0 0 6" strokeWidth="2" /></Svg>
                  </button>
                </div>
              </div>
              <div className="flex min-h-0 flex-1">
                <div className="flex min-w-0 flex-1 flex-col">
                  <div className="flex h-[15px] shrink-0">
                    <div className="w-[15px] border-r border-b border-[#6a6a6a] bg-[#262626] p-1">
                      <div className="h-full w-full border-t border-l border-dotted border-[#6a6a6a]" />
                    </div>
                    <HorizontalRuler />
                  </div>
                  <div className="flex min-h-0 flex-1">
                    <VerticalRuler />
                    <div className="relative min-w-0 flex-1 overflow-hidden bg-[#5e5e5e]">
                      <Letter />
                      <GradientPanel />
                    </div>
                  </div>
                </div>
                <div className="flex w-[15px] shrink-0 flex-col items-center justify-between py-[6px] text-[#5e5e5e]">
                  <Svg w={9} h={5}><path d="M1 4.500 4.500 1 8 4.500" /></Svg>
                  <Svg w={9} h={5}><path d="M1 .5 4.500 4 8 .5" /></Svg>
                </div>
              </div>
              <StatusBar />
            </main>
            <div className="w-[3px] shrink-0 border-x border-[#383838] bg-[#474747]" />
            <Dock />
            <div className="w-[3px] shrink-0" />
          </div>
          <div className="h-1 shrink-0 border-t border-[#3a3a3a]" />
        </div>
        <div className="flex w-[10px] shrink-0 flex-col">
          <div className="h-[54px]" />
          <div className="h-[94px] border-b border-[#c8c8c8] bg-[#f3f3f3]" />
          <div className="flex-1 border-b border-[#c8c8c8] bg-white" />
          <div className="h-[11px] bg-[#f3f3f3]" />
        </div>
      </div>
      <div className="flex h-[5px] shrink-0 items-end overflow-hidden bg-[#f3f3f3] pl-2 text-[11px] leading-[13px] text-[#333333]">
        <span className="mr-4">テム数: 1,364</span>
        <span>未読: 1</span>
        <span className="ml-auto flex h-full w-[38px] justify-center bg-[#c6c6c6]">
          <span className="h-1 w-[14px] border border-t-0 border-[#777777]" />
        </span>
        <span className="ml-[14px] h-[3px] w-3 self-start border border-t-0 border-[#777777]" />
        <span className="ml-[75px] h-1 w-[5px] self-start bg-[#777777]" />
        <span className="mr-[14px] ml-[54px] h-[3px] w-[2px] self-start bg-[#777777]" />
        <span className="mr-2 text-[14px] leading-[15px]">100%</span>
      </div>
    </div>
  );
}
